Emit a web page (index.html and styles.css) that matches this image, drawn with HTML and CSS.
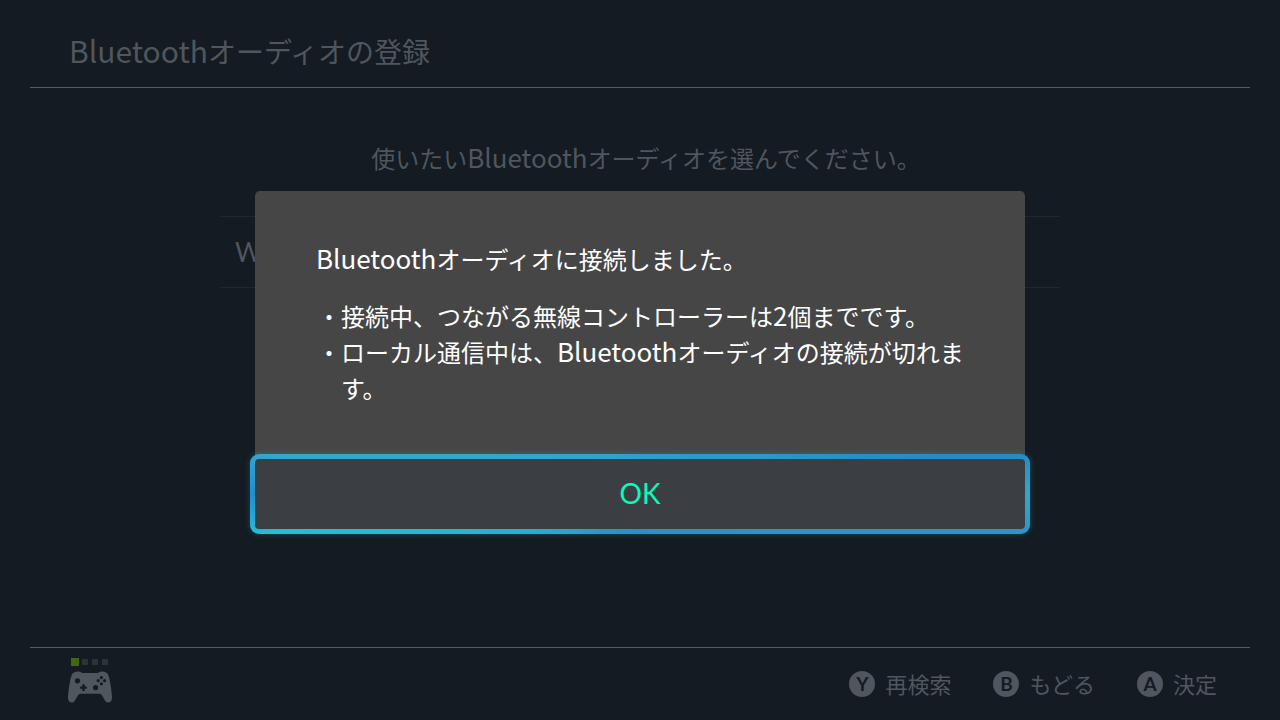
FILE: index.html
```html
<!DOCTYPE html>
<html lang="ja">
<head>
  <meta charset="UTF-8">
  <meta name="viewport" content="width=device-width, initial-scale=1">
  <title>Bluetoothオーディオの登録</title>
  <link rel="stylesheet" href="styles.css">
</head>
<body>
  <header class="header">
    <h1><span class="latin">Bluetooth</span>オーディオの登録</h1>
  </header>

  <main class="main">
    <p class="guide">使いたい<span class="latin">Bluetooth</span>オーディオを選んでください。</p>
    <ul class="device-list">
      <li class="device">W</li>
    </ul>
  </main>

  <footer class="footer">
    <div class="controller">
      <div class="leds">
        <span class="led led-on"></span>
        <span class="led"></span>
        <span class="led"></span>
        <span class="led"></span>
      </div>
      <svg class="pad" viewBox="0 0 44 32" width="44" height="32" aria-hidden="true">
        <path class="pad-body" d="M10 0.5 C7 0.5 4.5 1.5 3.5 4.5 C1.8 10 0.3 20 0 26 C-0.2 30 2 32 4.5 31.5 C8 31 8.5 24 12 22.8 H32 C35.5 24 36 31 39.5 31.5 C42 32 44.2 30 44 26 C43.7 20 42.2 10 40.5 4.5 C39.5 1.5 37 0.5 34 0.5 C31 0.3 31 2 29.5 2 H14.5 C13 2 13 0.3 10 0.5 Z"/>
        <g class="pad-hole">
          <circle cx="9.5" cy="9.8" r="2.6"/>
          <circle cx="27.6" cy="16.6" r="2.6"/>
          <path d="M14.3 13.2 h2.4 v2.2 h2.2 v2.4 h-2.2 v2.2 h-2.4 v-2.2 h-2.2 v-2.4 h2.2 Z"/>
          <circle cx="33.4" cy="6.6" r="1.6"/>
          <circle cx="33.4" cy="12.8" r="1.6"/>
          <circle cx="30.2" cy="9.7" r="1.6"/>
          <circle cx="36.6" cy="9.7" r="1.6"/>
        </g>
      </svg>
    </div>
    <div class="actions">
      <button class="action" type="button"><span class="key">Y</span><span class="label">再検索</span></button>
      <button class="action" type="button"><span class="key">B</span><span class="label">もどる</span></button>
      <button class="action" type="button"><span class="key">A</span><span class="label">決定</span></button>
    </div>
  </footer>

  <!-- 接続完了ダイアログ -->
  <div class="overlay">
    <div class="dialog" role="dialog" aria-modal="true" aria-labelledby="dialog-title">
      <div class="dialog-body">
        <p id="dialog-title"><span class="latin">Bluetooth</span>オーディオに接続しました。</p>
        <ul class="notes">
          <li>・接続中、つながる無線コントローラーは<span class="latin">2</span>個までです。</li>
          <li>・ローカル通信中は、<span class="latin">Bluetooth</span>オーディオの接続が切れます。</li>
        </ul>
      </div>
      <button class="ok" type="button">OK</button>
    </div>
  </div>
</body>
</html>
```
FILE: styles.css
```css
* {
  box-sizing: border-box;
}

body {
  display: flex;
  flex-direction: column;
  min-height: 100vh;
  margin: 0;
  padding: 0 30px;
  background-color: #141b22;
  color: #50565d;
  font-family: "Noto Sans CJK JP", sans-serif;
  font-size: 24px;
  font-weight: 400;
  line-height: 36px;
}

h1, p, ul {
  margin: 0;
  padding: 0;
  font-weight: inherit;
}

ul {
  list-style: none;
}

button {
  padding: 0;
  border: 0;
  background: none;
  color: inherit;
  font: inherit;
}

/* 英字は少し大きめにする */
.latin {
  font-size: 26px;
  line-height: 1;
}

/* ヘッダー */
.header {
  display: flex;
  align-items: center;
  height: 88px;
  padding: 14px 39px 0;
  border-bottom: 1px solid #575c63;
}

.header h1 {
  font-size: 28px;
}

.header .latin {
  font-size: 30px;
}

/* メインコンテンツ */
.main {
  flex: 1;
  padding-top: 52px;
}

.guide {
  text-align: center;
  font-feature-settings: "halt";
}

.device-list {
  max-width: 840px;
  margin: 40px auto 0;
}

.device {
  display: flex;
  align-items: center;
  height: 72px;
  padding: 0 15px;
  border-top: 1px solid #20272e;
  border-bottom: 1px solid #20272e;
  font-family: Lato, sans-serif;
  font-size: 26px;
}

/* フッター */
.footer {
  display: flex;
  justify-content: space-between;
  height: 73px;
  padding: 0 32px 0 38px;
  border-top: 1px solid #575c63;
}

.controller {
  padding-top: 10px;
}

.leds {
  display: flex;
  align-items: center;
  gap: 4px;
  height: 8px;
  padding-left: 3px;
  margin-bottom: 5px;
}

.led {
  width: 6px;
  height: 6px;
  background-color: #2c333a;
}

.led-on {
  width: 8px;
  height: 8px;
  margin-right: -1px;
  background-color: #446810;
}

.pad {
  display: block;
}

.pad-body {
  fill: #50565d;
}

.pad-hole {
  fill: #141b22;
}

.actions {
  display: flex;
  align-items: center;
  gap: 41px;
}

.action {
  display: flex;
  align-items: center;
  gap: 10px;
  font-size: 22px;
  line-height: 32px;
}

.key {
  width: 26px;
  height: 26px;
  border-radius: 50%;
  background-color: #50565d;
  color: #141b22;
  font-family: Lato, sans-serif;
  font-size: 19px;
  font-weight: 700;
  line-height: 26px;
  text-align: center;
}

.label {
  padding: 0 1px 3px 0;
}

/* ダイアログ */
.overlay {
  position: fixed;
  inset: 0;
  display: flex;
  justify-content: center;
  align-items: center;
}

.dialog {
  width: 770px;
  max-width: 90%;
  border-radius: 5px;
  background-color: #464646;
  color: #fff;
}

.dialog-body {
  padding: 50px 60px 48px 61px;
}

.notes {
  margin-top: 21px;
  padding-left: 25px;
}

.notes li {
  text-indent: -24px;
}

/* 選択中の枠 */
.ok {
  display: block;
  width: calc(100% + 10px);
  height: 80px;
  margin: 0 -5px -5px;
  padding-bottom: 2px;
  border: 5px solid transparent;
  border-radius: 9px;
  background:
    linear-gradient(#3b3e42, #3b3e42) padding-box,
    conic-gradient(#2c9fd0, #2b9acd 72deg, #258ac6 84deg, #2ea8d0 90deg, #2b94ca 96deg, #2492c8 180deg, #2498cb 225deg, #24b2d4 256deg, #24bed6 264deg, #1e90d0 270deg, #30a8cf 276deg, #2c9fd0) border-box;
  box-shadow: 0 0 6px rgba(40, 190, 190, 0.3);
  color: #0fb;
  font-family: Lato, sans-serif;
  font-size: 28px;
  font-weight: 400;
}
```
